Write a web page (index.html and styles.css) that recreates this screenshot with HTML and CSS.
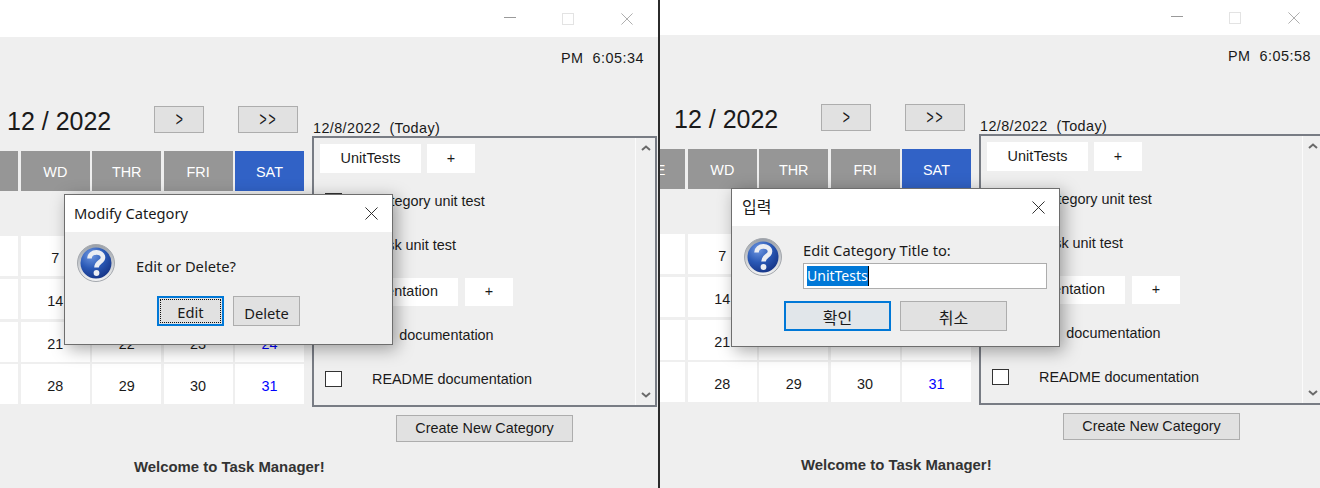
FILE: index.html
```html
<!DOCTYPE html>
<html lang="en">
<head>
    <meta charset="UTF-8">
    <meta name="viewport" content="width=device-width, initial-scale=1.0">
    <title>Task Manager</title>
    <link rel="stylesheet" href="styles.css">
</head>
<body>
    <svg class="defs" width="0" height="0" aria-hidden="true">
        <defs>
            <radialGradient id="qBlue" cx="35%" cy="25%" r="85%">
                <stop offset="0" stop-color="#6f97e0"/>
                <stop offset="0.5" stop-color="#2a59b6"/>
                <stop offset="1" stop-color="#132f80"/>
            </radialGradient>
            <linearGradient id="qRing" x1="0" y1="0" x2="0" y2="1">
                <stop offset="0" stop-color="#9aa0a8"/>
                <stop offset="1" stop-color="#f4f4f5"/>
            </linearGradient>
            <symbol id="qIcon" viewBox="0 0 38 38">
                <circle cx="19" cy="19" r="18.5" fill="url(#qRing)" stroke="#a3a7ad" stroke-width="1"/>
                <circle cx="19" cy="19" r="15.5" fill="url(#qBlue)"/>
                <path d="M12.5 14.5 C12.5 6.5 26 6.5 26 13.5 C26 18 19.5 18 19.5 23.5" fill="none" stroke="#eceef3" stroke-width="4.6"/>
                <circle cx="19.5" cy="29" r="2.9" fill="#eceef3"/>
            </symbol>
            <symbol id="xIcon" viewBox="0 0 14 14">
                <path d="M0.5 0.5 L13.5 13.5 M13.5 0.5 L0.5 13.5" fill="none" stroke="currentColor" stroke-width="1"/>
            </symbol>
        </defs>
    </svg>

    <!-- First capture: Modify Category -->
    <section class="pane">
        <div class="app">
            <div class="titlebar">
                <span class="win-min"></span>
                <span class="win-max"></span>
                <svg class="win-close"><use href="#xIcon"/></svg>
            </div>
            <div class="clock">PM&nbsp; 6:05:34</div>
            <div class="main">
                <div class="cal-col">
                    <div class="month-row">
                        <span class="month">12 / 2022</span>
                        <button class="btn btn-next"><span class="chev">&gt;</span></button>
                        <button class="btn btn-next2"><span class="chev">&gt;&gt;</span></button>
                    </div>
                    <div class="cal">
                        <div class="day">TUE</div><div class="day">WD</div><div class="day">THR</div><div class="day">FRI</div><div class="day day-sat">SAT</div>
                        <div class="cell cell-none"></div><div class="cell cell-none"></div><div class="cell">1</div><div class="cell">2</div><div class="cell cell-sat">3</div>
                        <div class="cell">6</div><div class="cell">7</div><div class="cell">8</div><div class="cell">9</div><div class="cell cell-sat">10</div>
                        <div class="cell">13</div><div class="cell">14</div><div class="cell">15</div><div class="cell">16</div><div class="cell cell-sat">17</div>
                        <div class="cell">20</div><div class="cell">21</div><div class="cell">22</div><div class="cell">23</div><div class="cell cell-sat">24</div>
                        <div class="cell">27</div><div class="cell">28</div><div class="cell">29</div><div class="cell">30</div><div class="cell cell-sat">31</div>
                    </div>
                </div>
                <div class="side">
                    <div class="today">12/8/2022&nbsp; (Today)</div>
                    <div class="panel">
                        <div class="list">
                            <div class="category">
                                <div class="cat-head"><span class="tab tab-unit">UnitTests</span><span class="tab tab-add">+</span></div>
                                <div class="task"><span class="check"></span>Category unit test</div>
                                <div class="task"><span class="check"></span>Task unit test</div>
                            </div>
                            <div class="category">
                                <div class="cat-head cat-head-doc"><span class="tab tab-doc">Documentation</span><span class="tab tab-add">+</span></div>
                                <div class="task"><span class="check"></span>Fix&nbsp; documentation</div>
                                <div class="task"><span class="check"></span>README documentation</div>
                            </div>
                        </div>
                        <div class="scrollbar">
                            <svg width="10" height="6" viewBox="0 0 10 6"><path d="M1 5 L5 1.5 L9 5" fill="none" stroke="#6a6a6a" stroke-width="2"/></svg>
                            <svg width="10" height="6" viewBox="0 0 10 6"><path d="M1 1 L5 4.5 L9 1" fill="none" stroke="#6a6a6a" stroke-width="2"/></svg>
                        </div>
                    </div>
                    <button class="btn btn-create">Create New Category</button>
                </div>
            </div>
            <div class="welcome">Welcome to Task Manager!</div>
        </div>

        <div class="dialog dialog-modify">
            <div class="dialog-title">
                <span>Modify Category</span>
                <svg class="dialog-x"><use href="#xIcon"/></svg>
            </div>
            <div class="dialog-body">
                <svg class="q-icon"><use href="#qIcon"/></svg>
                <span class="dialog-msg">Edit or Delete?</span>
            </div>
            <div class="dialog-actions">
                <button class="dbtn dbtn-focus"><span class="dotted">Edit</span></button>
                <button class="dbtn">Delete</button>
            </div>
        </div>
    </section>

    <div class="divider"></div>

    <!-- Second capture: edit title prompt -->
    <section class="pane pane-right">
        <div class="app">
            <div class="titlebar">
                <span class="win-min"></span>
                <span class="win-max"></span>
                <svg class="win-close"><use href="#xIcon"/></svg>
            </div>
            <div class="clock">PM&nbsp; 6:05:58</div>
            <div class="main">
                <div class="cal-col">
                    <div class="month-row">
                        <span class="month">12 / 2022</span>
                        <button class="btn btn-next"><span class="chev">&gt;</span></button>
                        <button class="btn btn-next2"><span class="chev">&gt;&gt;</span></button>
                    </div>
                    <div class="cal">
                        <div class="day">TUE</div><div class="day">WD</div><div class="day">THR</div><div class="day">FRI</div><div class="day day-sat">SAT</div>
                        <div class="cell cell-none"></div><div class="cell cell-none"></div><div class="cell">1</div><div class="cell">2</div><div class="cell cell-sat">3</div>
                        <div class="cell">6</div><div class="cell">7</div><div class="cell">8</div><div class="cell">9</div><div class="cell cell-sat">10</div>
                        <div class="cell">13</div><div class="cell">14</div><div class="cell">15</div><div class="cell">16</div><div class="cell cell-sat">17</div>
                        <div class="cell">20</div><div class="cell">21</div><div class="cell">22</div><div class="cell">23</div><div class="cell cell-sat">24</div>
                        <div class="cell">27</div><div class="cell">28</div><div class="cell">29</div><div class="cell">30</div><div class="cell cell-sat">31</div>
                    </div>
                </div>
                <div class="side">
                    <div class="today">12/8/2022&nbsp; (Today)</div>
                    <div class="panel">
                        <div class="list">
                            <div class="category">
                                <div class="cat-head"><span class="tab tab-unit">UnitTests</span><span class="tab tab-add">+</span></div>
                                <div class="task"><span class="check"></span>Category unit test</div>
                                <div class="task"><span class="check"></span>Task unit test</div>
                            </div>
                            <div class="category">
                                <div class="cat-head cat-head-doc"><span class="tab tab-doc">Documentation</span><span class="tab tab-add">+</span></div>
                                <div class="task"><span class="check"></span>Fix&nbsp; documentation</div>
                                <div class="task"><span class="check"></span>README documentation</div>
                            </div>
                        </div>
                        <div class="scrollbar">
                            <svg width="10" height="6" viewBox="0 0 10 6"><path d="M1 5 L5 1.5 L9 5" fill="none" stroke="#6a6a6a" stroke-width="2"/></svg>
                            <svg width="10" height="6" viewBox="0 0 10 6"><path d="M1 1 L5 4.5 L9 1" fill="none" stroke="#6a6a6a" stroke-width="2"/></svg>
                        </div>
                    </div>
                    <button class="btn btn-create">Create New Category</button>
                </div>
            </div>
            <div class="welcome">Welcome to Task Manager!</div>
        </div>

        <div class="dialog dialog-input">
            <div class="dialog-title">
                <span class="ko">입력</span>
                <svg class="dialog-x"><use href="#xIcon"/></svg>
            </div>
            <div class="dialog-body">
                <svg class="q-icon"><use href="#qIcon"/></svg>
                <div class="prompt">
                    <label class="prompt-label">Edit Category Title to:</label>
                    <div class="prompt-input"><span class="selected">UnitTests</span></div>
                </div>
            </div>
            <div class="dialog-actions">
                <button class="dbtn dbtn-wide dbtn-default ko">확인</button>
                <button class="dbtn dbtn-wide ko">취소</button>
            </div>
        </div>
    </section>
</body>
</html>
```

FILE: styles.css
```css
html, body {
    margin: 0;
    padding: 0;
}
body {
    display: flex;
    width: 1320px;
    height: 488px;
    overflow: hidden;
    background-color: #efefef;
    font-family: "Liberation Sans", Arial, sans-serif;
    font-size: 14.4px;
    color: #1a1a1a;
}
.defs {
    position: absolute;
}
.pane {
    position: relative;
    width: 658px;
    height: 488px;
    overflow: hidden;
    flex: none;
}
.pane-right {
    width: 660px;
}
.divider {
    width: 2px;
    flex: none;
    background-color: #2b2b2b;
}
.app {
    width: 658px;
}
.pane-right .app {
    padding-left: 7px;
}

/* title bar */
.titlebar {
    height: 37px;
    margin-left: -7px;
    padding-left: 7px;
    background-color: #fff;
    display: flex;
    align-items: center;
    justify-content: flex-end;
    padding-right: 25px;
}
.pane-right .titlebar {
    height: 35px;
}
.win-min {
    width: 12px;
    height: 1px;
    background-color: #9a9a9a;
    margin-right: 46px;
    margin-bottom: 2px;
}
.win-max {
    width: 10px;
    height: 10px;
    border: 1px solid #e3e3e3;
    margin-right: 47px;
}
.win-close {
    width: 12px;
    height: 12px;
    color: #a0a0a0;
}

.clock {
    padding-top: 13px;
    padding-right: 14px;
    text-align: right;
    line-height: 16px;
    letter-spacing: 0.5px;
}
.main {
    display: flex;
    margin-top: 40px;
}

/* calendar */
.cal-col {
    width: 312px;
    flex: none;
}
.month-row {
    display: flex;
    align-items: center;
    height: 27px;
    margin-bottom: 18px;
    padding-left: 7px;
}
.month {
    width: 147px;
    font-size: 25px;
    margin-top: 4px;
}
.btn {
    height: 27px;
    padding: 0 0 2px;
    background-color: #e1e1e1;
    border: 1px solid #adadad;
    font-family: inherit;
    font-size: 14.4px;
    color: #1a1a1a;
}
.chev {
    display: inline-block;
    transform: scale(0.85, 1.35);
}
.btn-next {
    width: 50px;
    margin-right: 34px;
}
.btn-next2 {
    width: 60px;
    letter-spacing: 2px;
}
.cal {
    display: grid;
    grid-template-columns: repeat(5, 69px);
    grid-template-rows: repeat(6, 40px);
    column-gap: 2.4px;
    row-gap: 2.67px;
    margin-left: -50.6px;
}
.day {
    display: flex;
    align-items: center;
    justify-content: center;
    padding-top: 1px;
    background-color: #969696;
    color: #fff;
}
.day-sat {
    background-color: #3162c6;
}
.cell {
    display: flex;
    align-items: center;
    justify-content: center;
    padding-top: 4px;
    background-color: #fff;
}
.cell-none {
    background-color: transparent;
}
.cell-sat {
    color: #0000ff;
}

/* category panel */
.side {
    width: 345px;
    flex: none;
}
.today {
    margin-top: 14px;
    padding-left: 1px;
    line-height: 16px;
    letter-spacing: 0.4px;
}
.panel {
    display: flex;
    box-sizing: border-box;
    height: 271px;
    border: 2px solid #787c84;
}
.list {
    flex: 1;
    padding: 6px 0 0 6px;
}
.category {
    margin-bottom: 24px;
}
.cat-head {
    display: flex;
    gap: 6px;
}
.cat-head-doc {
    gap: 7px;
}
.tab {
    box-sizing: border-box;
    display: flex;
    align-items: center;
    justify-content: center;
    height: 29px;
    padding-bottom: 2px;
    background-color: #fff;
    letter-spacing: 0.1px;
}
.cat-head-doc .tab {
    height: 28px;
}
.tab-unit {
    width: 101px;
}
.tab-doc {
    width: 138px;
}
.tab-add {
    width: 48px;
}
.task {
    display: flex;
    align-items: flex-start;
    height: 17px;
    line-height: 17px;
    margin-top: 20px;
    padding-left: 5px;
}
.cat-head-doc + .task {
    margin-top: 21px;
}
.task + .task {
    margin-top: 27px;
}
.check {
    box-sizing: border-box;
    width: 17px;
    height: 16px;
    margin-right: 30px;
    background-color: #fff;
    border: 1px solid #333;
}
.scrollbar {
    display: flex;
    flex-direction: column;
    justify-content: space-between;
    align-items: center;
    box-sizing: border-box;
    width: 20px;
    padding: 7px 0 7px;
    border-left: 1px solid #fbfbfb;
}
.btn-create {
    display: block;
    width: 177px;
    margin: 8px 0 0 84px;
}
.welcome {
    margin-top: 17px;
    padding-left: 134px;
    font-size: 14.9px;
    font-weight: bold;
    line-height: 16px;
    color: #333;
}

/* dialogs */
.dialog {
    position: absolute;
    box-sizing: border-box;
    width: 329px;
    background-color: #efefef;
    border: 1px solid #6e6e6e;
    box-shadow: 4px 4px 16px rgba(0, 0, 0, 0.35);
    font-family: "Noto Sans", "Noto Sans CJK KR", sans-serif;
    font-size: 14.7px;
    color: #1a1a1a;
}
.dialog-modify {
    left: 64px;
    top: 194px;
    height: 151px;
}
.dialog-input {
    left: 71px;
    top: 188px;
    height: 159px;
}
.ko {
    font-family: "Noto Sans CJK KR", "Noto Sans", sans-serif;
    font-size: 16px;
}
.dialog-title {
    display: flex;
    align-items: center;
    justify-content: space-between;
    height: 37px;
    padding: 0 14px 0 9px;
    background-color: #fff;
}
.dialog-title span {
    margin-bottom: 2px;
}
.dialog-title .ko {
    margin-left: 1px;
    margin-bottom: 4px;
}
.dialog-x {
    width: 13px;
    height: 13px;
    color: #222;
}
.dialog-input .dialog-x {
    margin-bottom: 1px;
}
.dialog-body {
    display: flex;
    padding: 12px 0 0 12px;
}
.q-icon {
    width: 38px;
    height: 38px;
    flex: none;
    margin-right: 21px;
}
.dialog-msg {
    margin-top: 12px;
}
.dialog-actions {
    display: flex;
    justify-content: flex-end;
    gap: 9px;
}
.dialog-modify .dialog-actions {
    padding-right: 92px;
    margin-top: 14px;
}
.dialog-input .dialog-actions {
    padding-right: 52px;
}
.dbtn {
    box-sizing: border-box;
    width: 67px;
    height: 30px;
    padding: 3px 0 0;
    background-color: #e1e1e1;
    border: 1px solid #adadad;
    font: inherit;
    color: inherit;
}
.dbtn.ko {
    padding-top: 2px;
    font-family: "Noto Sans CJK KR", "Noto Sans", sans-serif;
    font-size: 16px;
}
.dbtn-focus {
    border: 2px solid #0078d7;
    padding: 1px;
}
.dotted {
    display: flex;
    align-items: center;
    justify-content: center;
    box-sizing: border-box;
    height: 100%;
    padding-top: 2px;
    border: 1px dotted #111;
}
.dbtn-wide {
    width: 107px;
}
.dbtn-default {
    background-color: #e1e6ea;
    border: 2px solid #0078d7;
}
.prompt {
    display: flex;
    flex-direction: column;
    width: 244px;
}
.prompt-label {
    line-height: 20px;
    margin-top: 2px;
}
.prompt-input {
    box-sizing: border-box;
    height: 26px;
    margin-top: 3px;
    margin-bottom: 12px;
    padding: 2px 3px;
    background-color: #fff;
    border: 1px solid #adadad;
    font-size: 14px;
}
.selected {
    display: inline-block;
    line-height: 20px;
    background-color: #0078d7;
    color: #fff;
    border-right: 1px solid #000;
}
```
